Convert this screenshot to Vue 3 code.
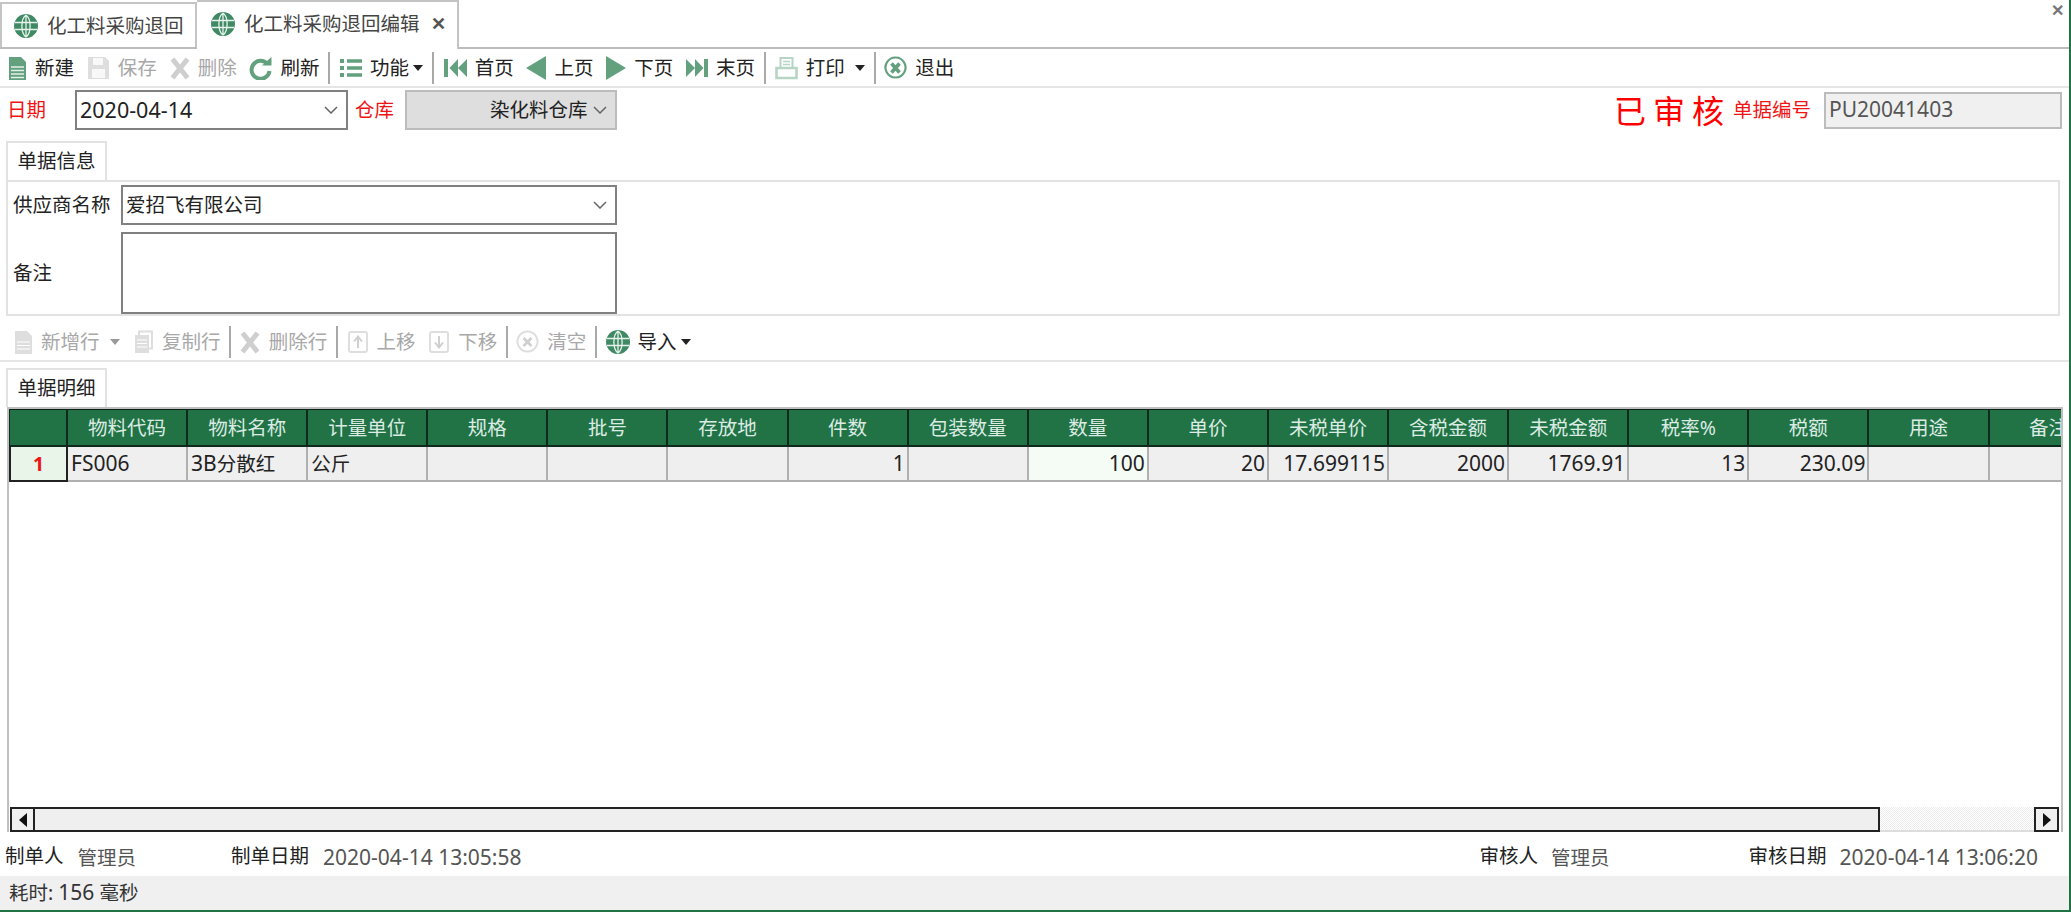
<script setup>
import { h } from 'vue'

const G = '#62a07e'
const P = '#b6d5c5'
const D = '#dedede'
const D2 = '#cfcfcf'
const globeColor = '#3f8a64'

const shapes = {
  doc: [
    { d: 'M1 1h12l5 5v18H1z', f: G },
    { d: 'M3 11h13M3 14.5h13M3 18h13M3 21.5h13', s: '#e4f0ea', w: 1.3 }
  ],
  docGray: [
    { d: 'M1 1h12l5 5v18H1z', f: D },
    { d: 'M3 12h13M3 15.5h13M3 19h13', s: '#fff', w: 1.2 }
  ],
  save: [
    { d: 'M1 1h17l4 4v18H1z', f: D },
    { d: 'M6 2h10v7H6zM5 13h13v9H5z', f: '#f8f8f8' }
  ],
  del: [{ d: 'M2.5 3 17.5 22M17.5 3 2.5 22', s: D2, w: 5 }],
  refresh: [
    { d: 'M18.5 8A9 9 0 1 0 20.5 15', s: G, w: 4 },
    { d: 'M13 9.500h9.500V1z', f: G }
  ],
  list: [
    { d: 'M1 5h4M1 12h4M1 19h4', s: G, w: 4 },
    { d: 'M8 5h15M8 12h15M8 19h15', s: G, w: 3.4 }
  ],
  first: [{ d: 'M1 3h4v18H1zM15 3 6.500 12l8.500 9zM24 3l-9 9 9 9z', f: G }],
  prev: [{ d: 'M20 0v24L0 12z', f: G }],
  next: [{ d: 'M0 0v24l20-12z', f: G }],
  last: [{ d: 'M0 3l9 9-9 9zM9 3l8.500 9L9 21zM18 3h4v18h-4z', f: G }],
  print: [
    { d: 'M5.500 2h12v10h-12z', s: P, w: 2 },
    { d: 'M8 5.500h7M8 8.500h7', s: P, w: 1.3 },
    { d: 'M1.500 12h20v10h-20z', s: P, w: 2.6 }
  ],
  exit: [
    { d: 'M11.500 1.500a10 10 0 1 0 .01 0z', s: G, w: 2.2 },
    { d: 'M7.500 7.500l8 9M15.500 7.500l-8 9', s: G, w: 3.6 }
  ],
  copy: [
    { d: 'M7 1.500h13v17H7z', s: D, w: 2 },
    { d: 'M3 5h14v18H3z', f: D },
    { d: 'M5 10h10M5 13.500h10M5 17h10', s: '#fff', w: 1.2 }
  ],
  up: [
    { d: 'M4 2h14a2 2 0 0 1 2 2v16a2 2 0 0 1-2 2H4a2 2 0 0 1-2-2V4a2 2 0 0 1 2-2z', s: D, w: 2 },
    { d: 'M11 18V8M7 11.500l4-5 4 5', s: D2, w: 2 }
  ],
  down: [
    { d: 'M4 2h14a2 2 0 0 1 2 2v16a2 2 0 0 1-2 2H4a2 2 0 0 1-2-2V4a2 2 0 0 1 2-2z', s: D, w: 2 },
    { d: 'M11 6v10M7 12.500l4 5 4-5', s: D2, w: 2 }
  ],
  clear: [
    { d: 'M11.500 1.500a10 10 0 1 0 .01 0z', s: D, w: 2 },
    { d: 'M7.500 8l8 8M15.500 8l-8 8', s: D2, w: 2.6 }
  ],
  globe: [
    { d: 'M12 0a12 12 0 1 0 .01 0z', f: globeColor },
    { d: 'M12 1C6.500 5 6.500 19 12 23C17.500 19 17.500 5 12 1M1 8.500h22M1 15.500h22M12 1v22', s: '#e8f2ec', w: 1.3 }
  ]
}

const Ic = (props) =>
  h(
    'svg',
    { width: props.w, height: 24, viewBox: `0 0 ${props.w} 24`, style: 'display:block;flex:none' },
    shapes[props.name].map((p) =>
      h('path', { d: p.d, fill: p.f || 'none', stroke: p.s || 'none', 'stroke-width': p.w || 0 })
    )
  )
Ic.props = ['name', 'w']

const mainTools = [
  { i: 'doc', w: 19, t: '新建' },
  { i: 'save', w: 23, t: '保存', off: true },
  { i: 'del', w: 20, t: '删除', off: true },
  { i: 'refresh', w: 23, t: '刷新' },
  { sep: true },
  { i: 'list', w: 23, t: '功能', caret: 4 },
  { sep: true },
  { i: 'first', w: 24, t: '首页' },
  { i: 'prev', w: 20, t: '上页' },
  { i: 'next', w: 20, t: '下页' },
  { i: 'last', w: 22, t: '末页' },
  { sep: true },
  { i: 'print', w: 23, t: '打印', caret: 10 },
  { sep: true },
  { i: 'exit', w: 23, t: '退出' }
]

const rowTools = [
  { i: 'docGray', w: 19, t: '新增行', off: true, caret: 10, dim: true },
  { i: 'copy', w: 22, t: '复制行', off: true },
  { sep: true },
  { i: 'del', w: 21, t: '删除行', off: true },
  { sep: true },
  { i: 'up', w: 22, t: '上移', off: true },
  { i: 'down', w: 22, t: '下移', off: true },
  { sep: true },
  { i: 'clear', w: 23, t: '清空', off: true },
  { sep: true },
  { i: 'globe', w: 24, t: '导入', caret: 4 }
]

const columns = [
  { t: '物料代码', v: 'FS006', num: true },
  { t: '物料名称', pre: '3B', v: '分散红' },
  { t: '计量单位', v: '公斤' },
  { t: '规格', v: '' },
  { t: '批号', v: '' },
  { t: '存放地', v: '' },
  { t: '件数', v: '1', r: true, num: true },
  { t: '包装数量', v: '' },
  { t: '数量', v: '100', r: true, hi: true, num: true },
  { t: '单价', v: '20', r: true, num: true },
  { t: '未税单价', v: '17.699115', r: true, num: true },
  { t: '含税金额', v: '2000', r: true, num: true },
  { t: '未税金额', v: '1769.91', r: true, num: true },
  { t: '税率%', v: '13', r: true, num: true },
  { t: '税额', v: '230.09', r: true, num: true },
  { t: '用途', v: '' },
  { t: '备注', v: '' }
]
</script>

<template>
  <div class="page">
    <div class="tabs">
      <div class="tab">
        <Ic name="globe" :w="24" />
        <span>化工料采购退回</span>
      </div>
      <div class="tab active">
        <Ic name="globe" :w="24" />
        <span>化工料采购退回编辑</span>
        <span class="tab-x">✕</span>
      </div>
      <span class="win-x">✕</span>
    </div>

    <div class="toolbar main">
      <template v-for="(it, n) in mainTools" :key="n">
        <i v-if="it.sep" class="sep"></i>
        <div v-else class="tool" :class="{ off: it.off }">
          <Ic :name="it.i" :w="it.w" />
          <span>{{ it.t }}</span>
          <i v-if="it.caret" class="caret" :class="{ wide: it.caret === 10 }"></i>
        </div>
      </template>
    </div>

    <div class="head">
      <span class="red lab-date">日期</span>
      <div class="field date">
        <span class="num">2020-04-14</span>
        <svg class="chev" width="14" height="8" viewBox="0 0 14 8"><path d="M1 1l6 6 6-6" fill="none" stroke="#666" stroke-width="1.500" /></svg>
      </div>
      <span class="red lab-store">仓库</span>
      <div class="field store">
        <span>染化料仓库</span>
        <svg class="chev" width="14" height="8" viewBox="0 0 14 8"><path d="M1 1l6 6 6-6" fill="none" stroke="#666" stroke-width="1.500" /></svg>
      </div>
      <span class="stamp">已审核</span>
      <span class="red lab-no">单据编号</span>
      <div class="field billno num-small">PU20041403</div>
    </div>

    <div class="page-tab first-tab">单据信息</div>
    <div class="info">
      <div class="info-row">
        <span class="info-label">供应商名称</span>
        <div class="field supplier">
          <span>爱招飞有限公司</span>
          <svg class="chev" width="14" height="8" viewBox="0 0 14 8"><path d="M1 1l6 6 6-6" fill="none" stroke="#666" stroke-width="1.500" /></svg>
        </div>
      </div>
      <div class="info-row">
        <span class="info-label">备注</span>
        <div class="field memo"></div>
      </div>
    </div>

    <div class="toolbar rows">
      <template v-for="(it, n) in rowTools" :key="n">
        <i v-if="it.sep" class="sep"></i>
        <div v-else class="tool" :class="{ off: it.off }">
          <Ic :name="it.i" :w="it.w" />
          <span>{{ it.t }}</span>
          <i v-if="it.caret" class="caret" :class="{ wide: it.caret === 10, dim: it.dim }"></i>
        </div>
      </template>
    </div>

    <div class="page-tab">单据明细</div>
    <div class="grid-box">
      <div class="grid">
        <div class="hd corner"></div>
        <div v-for="c in columns" :key="c.t" class="hd"><span class="hd-t">{{ c.t }}</span></div>
        <div class="rowno">1</div>
        <div
          v-for="c in columns"
          :key="c.t + 'v'"
          class="cell"
          :class="{ right: c.r, hi: c.hi, 'num-small': c.num }"
        ><span v-if="c.pre" class="num-small">{{ c.pre }}</span>{{ c.v }}</div>
      </div>
      <div class="scroll">
        <div class="sbtn">
          <svg width="8" height="14" viewBox="0 0 8 14"><path d="M8 0v14L0 7z" fill="#111" /></svg>
        </div>
        <div class="thumb"></div>
        <div class="track"></div>
        <div class="sbtn">
          <svg width="8" height="14" viewBox="0 0 8 14"><path d="M0 0v14l8-7z" fill="#111" /></svg>
        </div>
      </div>
    </div>

    <div class="foot">
      <span class="f-lab f1">制单人</span>
      <span class="f-val v1">管理员</span>
      <span class="f-lab f2">制单日期</span>
      <span class="f-val v2 num-small">2020-04-14 13:05:58</span>
      <span class="f-lab f3">审核人</span>
      <span class="f-val v3">管理员</span>
      <span class="f-lab f4">审核日期</span>
      <span class="f-val v4 num-small">2020-04-14 13:06:20</span>
    </div>

    <div class="status">耗时: <span class="status-n num-small">156</span> 毫秒</div>
  </div>
</template>

<style scoped>
.page {
  width: 2071px;
  height: 912px;
  box-sizing: border-box;
  border-right: 2px solid #217346;
  border-bottom: 2px solid #217346;
  display: flex;
  flex-direction: column;
  overflow: hidden;
  background: #fff;
  color: #222;
  font: 19.5px/1.2 "Noto Sans", "Noto Sans CJK SC", sans-serif;
}
.num {
  font-size: 21.5px;
}
.num-small {
  font-size: 21px;
}
.tabs {
  height: 47px;
  flex: none;
  box-sizing: content-box;
  border-bottom: 2px solid #bcbcbc;
  display: flex;
  align-items: flex-end;
}
.tab {
  height: 45px;
  width: 197px;
  box-sizing: border-box;
  border: 2px solid #c4c4c4;
  border-bottom: 0;
  display: flex;
  align-items: center;
  gap: 9px;
  padding-left: 12px;
  color: #444;
}
.tab.active {
  height: 49px;
  width: 262px;
  margin-bottom: -2px;
  background: #fff;
  border-left: 0;
  padding: 0 0 4px 14px;
  gap: 9px;
}
.tab-x {
  font-size: 18px;
  font-weight: 700;
  color: #555;
  margin-left: 2px;
}
.win-x {
  margin-left: auto;
  margin-right: 5px;
  align-self: flex-start;
  margin-top: 1px;
  font-size: 16px;
  font-weight: 700;
  color: #777;
}
.toolbar {
  display: flex;
  align-items: center;
  gap: 12.8px;
  flex: none;
  box-sizing: border-box;
  border-bottom: 2px solid #e6e6e6;
}
.toolbar.main {
  height: 39px;
  padding-left: 8px;
}
.toolbar.rows {
  height: 46px;
  padding: 8px 0 0 14px;
  gap: 12.6px;
}
.tool {
  display: flex;
  align-items: center;
  gap: 8px;
  white-space: nowrap;
}
.tool.off {
  color: #a8a8a8;
}
.sep {
  width: 2px;
  height: 32px;
  background: #a9a9a9;
  margin: 0 -4px;
}
.caret {
  width: 0;
  height: 0;
  border: 5px solid transparent;
  border-top: 6px solid #222;
  border-bottom: 0;
  margin-left: -4px;
}
.caret.wide {
  margin-left: 2px;
}
.caret.dim {
  border-top-color: #999;
}
.head {
  height: 40px;
  margin-top: 2px;
  flex: none;
  display: flex;
  align-items: center;
  padding: 0 7px 0 7px;
}
.red {
  color: #f01414;
}
.field {
  box-sizing: border-box;
  border: 2px solid #808080;
  background: #fff;
  display: flex;
  align-items: center;
  justify-content: space-between;
  padding: 0 8px 0 3px;
}
.chev {
  flex: none;
}
.lab-date {
  width: 68px;
}
.date {
  width: 273px;
  height: 40px;
  padding-left: 3px;
}
.lab-store {
  margin-left: 7px;
  width: 50px;
}
.store {
  width: 212px;
  height: 40px;
  background: #dedede;
  border-color: #bcbcbc;
  padding-left: 83px;
}
.stamp {
  margin-left: auto;
  color: #f00;
  font-family: "Noto Sans CJK SC", sans-serif;
  font-size: 32px;
  letter-spacing: 7px;
  transform: translateY(-1px);
}
.lab-no {
  margin-left: 2px;
  width: 91px;
}
.billno {
  width: 238px;
  height: 37px;
  background: #f0f0f0;
  border-color: #bcbcbc;
  color: #555;
  padding-left: 3px;
}
.page-tab {
  flex: none;
  width: 101px;
  height: 39px;
  box-sizing: border-box;
  margin-left: 6px;
  margin-top: 6px;
  border: 2px solid #e2e2e2;
  border-bottom: 0;
  text-align: center;
  line-height: 36px;
}
.page-tab.first-tab {
  margin-top: 11px;
}
.info {
  flex: none;
  width: 2054px;
  height: 136px;
  margin-left: 6px;
  box-sizing: border-box;
  border: 2px solid #e2e2e2;
  padding: 3px 5px 0;
  display: flex;
  flex-direction: column;
  gap: 7px;
}
.info-row {
  display: flex;
  align-items: center;
}
.info-label {
  width: 108px;
  flex: none;
  white-space: nowrap;
}
.supplier {
  width: 496px;
  height: 40px;
}
.memo {
  width: 496px;
  height: 82px;
}
.grid-box {
  flex: none;
  width: 2056px;
  height: 425px;
  margin-left: 7px;
  box-sizing: border-box;
  border: 2px solid #c0c0c0;
  border-bottom: 0;
  display: flex;
  flex-direction: column;
  justify-content: space-between;
  overflow: hidden;
}
.grid {
  width: 2052px;
  display: grid;
  grid-template-columns: 59px repeat(17, 120.100px);
  grid-template-rows: 38px 35px;
  overflow: hidden;
}
.hd {
  background: #217346;
  color: #dcebe3;
  border-top: 1px solid #0c1f15;
  border-right: 2px solid #0f2a1c;
  border-bottom: 2px solid #0f2a1c;
  box-sizing: border-box;
  display: flex;
  align-items: center;
  justify-content: center;
  white-space: nowrap;
  overflow: hidden;
}
.corner {
  border-left: 1px solid #0f2a1c;
}
.rowno {
  background: #e8f5e8;
  border: 2px solid #222;
  border-top: 0;
  box-sizing: border-box;
  color: #f01414;
  font-weight: 700;
  display: flex;
  align-items: center;
  justify-content: center;
}
.cell {
  background: #efefef;
  border-right: 2px solid #b0b0b0;
  border-bottom: 2px solid #b0b0b0;
  box-sizing: border-box;
  padding: 0 2px 0 3px;
  display: flex;
  align-items: center;
  white-space: nowrap;
  overflow: hidden;
}
.cell.right {
  justify-content: flex-end;
}
.cell.hi {
  background: #f5fbf5;
}
.scroll {
  height: 25px;
  display: flex;
  flex: none;
  padding-right: 2px;
  padding-left: 1px;
}
.sbtn {
  width: 25px;
  flex: none;
  box-sizing: border-box;
  border: 2px solid #222;
  background: #f0f0f0;
  display: flex;
  align-items: center;
  justify-content: center;
}
.thumb {
  width: 1845px;
  flex: none;
  box-sizing: border-box;
  border: 2px solid #222;
  border-left: 0;
  background: #efefef;
}
.track {
  flex: 1;
  background: repeating-conic-gradient(#ececec 0 25%, #fff 0 50%) 0 0 / 2px 2px;
  border-bottom: 2px solid #ddd;
}
.foot {
  height: 44px;
  flex: none;
  display: flex;
  align-items: center;
  padding-top: 8px;
  box-sizing: border-box;
}
.f-lab {
  transform: translateY(-2px);
}
.f-val {
  color: #555;
}
.f1 { margin-left: 5px; }
.v1 { margin-left: 14px; }
.f2 { margin-left: 95px; }
.v2 { margin-left: 14px; }
.f3 { margin-left: auto; }
.v3 { margin-left: 13px; }
.f4 { margin-left: 139px; }
.v4 { margin-left: 13px; margin-right: 31px; }
.status {
  flex: 1;
  background: #f0f0f0;
  padding-left: 9px;
  display: flex;
  align-items: center;
  color: #333;
  white-space: pre;
}
</style>

<style>
html, body { margin: 0; padding: 0; background: #fff; }
</style>
